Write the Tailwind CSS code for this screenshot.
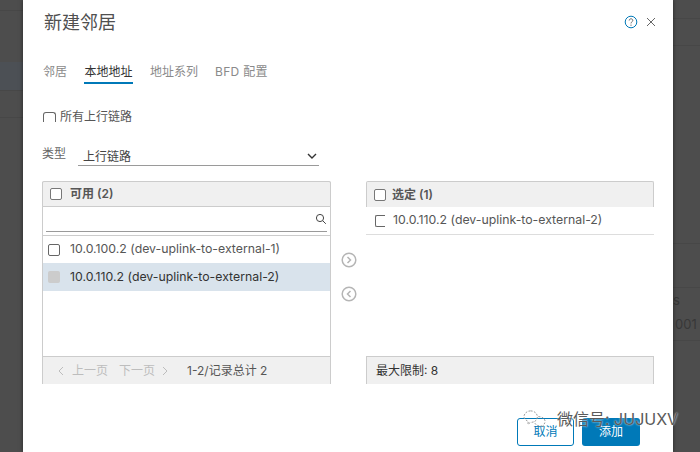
<!DOCTYPE html>
<html lang="en">
    <head>
        <meta charset="UTF-8" />
        <title>新建邻居</title>
        <script src="https://cdn.jsdelivr.net/npm/@tailwindcss/browser@4"></script>
    </head>
    <body class="overflow-hidden">
        <div class="relative flex w-[700px] h-[452px] bg-[#4d4d4d] text-[#565656] text-[12.3px] font-['Inter','Noto_Sans_CJK_SC',sans-serif]">
            <!-- dimmed page, left -->
            <div class="w-[23px] shrink-0">
                <div class="h-[11px] border-b border-[#474747]"></div>
                <div class="h-[51px]"></div>
                <div class="h-[29px] bg-[#4c5055] border-b border-[#474747]"></div>
                <div class="h-[27px] border-b border-[#474747]"></div>
            </div>

            <!-- modal -->
            <div class="relative w-[650px] shrink-0 bg-white shadow-[0_0_4px_rgba(0,0,0,0.5)]">
                <div class="flex items-start h-[55px] pl-[21px] pr-[17px] pt-[11px]">
                    <h1 class="flex-1 text-[18px] leading-[24px] text-[#505050]">新建邻居</h1>
                    <div class="flex items-center gap-[8px] pt-[4px]">
                        <svg width="14" height="14" viewBox="0 0 14 14" fill="none" stroke="#0079b8">
                            <circle cx="7" cy="7" r="5.8" />
                            <path d="M5.2 5.5c0-1 .8-1.700 1.800-1.700s1.800.7 1.800 1.600c0 1.500-1.800 1.400-1.800 3" stroke="#666666" />
                            <path d="M7 9.600v1.200" stroke="#666666" />
                        </svg>
                        <svg width="10" height="10" viewBox="0 0 10 10" stroke="#666666">
                            <path d="M1 1l8 8M9 1l-8 8" />
                        </svg>
                    </div>
                </div>

                <div class="flex h-[29px] pl-[20px] gap-[17px] text-[12px] text-[#8a8a8a]">
                    <span class="pt-[8px]">邻居</span>
                    <span class="pt-[8px] w-[49px] text-center text-[#333333] border-b-2 border-[#0079b8]">本地地址</span>
                    <span class="pt-[8px]">地址系列</span>
                    <span class="pt-[8px] tracking-[0.3px]">BFD 配置</span>
                </div>

                <label class="flex items-center gap-[4px] mt-[24px] ml-[20px] h-[18px] text-[12px]">
                    <span class="w-[13px] h-[10px] mb-[1px] border border-b-0 border-[#666666] rounded-t-[3px]"></span>
                    所有上行链路
                </label>

                <div class="flex items-center mt-[20px] ml-[19px] w-[277px] h-[20px] text-[12px]">
                    <span class="w-[36px] mb-[4px] text-[#666666]">类型</span>
                    <div class="flex items-center flex-1 h-[20px] pl-[5px] pr-[2px] pt-[2px] border-b border-[#9a9a9a] text-[#444444]">
                        <span class="flex-1">上行链路</span>
                        <svg width="10" height="7" viewBox="0 0 10 7" fill="none" stroke="#333333" stroke-width="1.4">
                            <path d="M1 1l4 4 4-4" />
                        </svg>
                    </div>
                </div>

                <div class="flex mt-[15px] ml-[19px]">
                    <!-- available -->
                    <div class="flex flex-col w-[289px] h-[203px] border-x border-[#cccccc] rounded-t-[2px]">
                        <div class="flex items-center h-[26px] -mx-px px-[7px] gap-[8px] bg-[#f0f0f0] border border-[#cccccc] rounded-t-[2px] text-[12px] font-semibold">
                            <span class="w-[12px] h-[12px] border-[1.5px] border-[#777777] rounded-[2px] bg-white"></span>
                            可用 (2)
                        </div>
                        <div class="flex items-center justify-end h-[25px] mx-[3px] border-b border-[#9a9a9a]">
                            <svg width="12" height="12" viewBox="0 0 12 12" fill="none" stroke="#444444">
                                <circle cx="5" cy="5" r="3.600" />
                                <path d="M7.800 7.800l3 3" />
                            </svg>
                        </div>
                        <div class="flex items-center h-[28px] mt-[3px] pl-[5px] gap-[10px] border-t border-[#cccccc]">
                            <span class="w-[12px] h-[12px] border border-[#666666] rounded-[2px]"></span>
                            10.0.100.2 (dev-uplink-to-external-1)
                        </div>
                        <div class="flex items-center h-[28px] pl-[5px] gap-[10px] bg-[#d9e3ec] text-[#333333]">
                            <span class="w-[12px] h-[12px] bg-[#cccccc] rounded-[2px]"></span>
                            10.0.110.2 (dev-uplink-to-external-2)
                        </div>
                        <div class="flex-1"></div>
                        <div class="flex items-center h-[28px] -mx-px pl-[15px] bg-[#f0f0f0] border-x border-t border-[#cccccc] text-[12px]">
                            <span class="flex items-center gap-[8px] text-[#bdbdbd]">
                                <svg width="6" height="10" viewBox="0 0 6 10" fill="none" stroke="#bdbdbd"><path d="M5 1L1 5l4 4" /></svg>
                                上一页
                            </span>
                            <span class="flex items-center gap-[7px] ml-[11px] text-[#bdbdbd]">
                                下一页
                                <svg width="6" height="10" viewBox="0 0 6 10" fill="none" stroke="#bdbdbd"><path d="M1 1l4 4-4 4" /></svg>
                            </span>
                            <span class="ml-[19px] text-[#565656]">1-2/记录总计 2</span>
                        </div>
                    </div>

                    <!-- move buttons -->
                    <div class="flex flex-col items-center gap-[18px] w-[35px] pt-[71px]">
                        <svg width="16" height="16" viewBox="0 0 16 16" fill="none" stroke="#b5b5b5" stroke-width="1.500">
                            <circle cx="8" cy="8" r="6.800" />
                            <path d="M6.500 5l3 3-3 3" />
                        </svg>
                        <svg width="16" height="16" viewBox="0 0 16 16" fill="none" stroke="#b5b5b5" stroke-width="1.500">
                            <circle cx="8" cy="8" r="6.800" />
                            <path d="M9.500 5l-3 3 3 3" />
                        </svg>
                    </div>

                    <!-- selected -->
                    <div class="flex flex-col w-[288px] h-[203px]">
                        <div class="flex items-center h-[26px] px-[7px] gap-[6px] bg-[#f0f0f0] border-x border-t border-[#cccccc] rounded-t-[2px] text-[12px] font-semibold">
                            <span class="w-[12px] h-[12px] border-[1.5px] border-[#777777] rounded-[2px] bg-white"></span>
                            选定 (1)
                        </div>
                        <div class="flex items-center h-[28px] pl-[9px] gap-[8px] border-b border-[#dddddd]">
                            <span class="w-[10px] h-[12px] border border-r-0 border-[#666666] rounded-l-[2px]"></span>
                            10.0.110.2 (dev-uplink-to-external-2)
                        </div>
                        <div class="flex-1"></div>
                        <div class="flex items-center h-[28px] pl-[9px] bg-[#f0f0f0] border-x border-t border-[#cccccc] text-[12px] text-[#333333]">
                            最大限制: 8
                        </div>
                    </div>
                </div>

                <div class="flex justify-end gap-[8px] mt-[34px] pr-[33px]">
                    <button class="w-[57px] h-[28px] border border-[#0079b8] rounded-[3px] text-[12px] text-[#0079b8]">取消</button>
                    <button class="w-[58px] h-[28px] bg-[#0079b8] rounded-[3px] text-[12px] text-white">添加</button>
                </div>
            </div>

            <!-- dimmed page, right -->
            <div class="flex-1 overflow-hidden text-[#383838] text-[13px]">
                <div class="h-[19px] border-b border-[#474747]"></div>
                <div class="h-[27px] border-b border-[#474747]"></div>
                <div class="h-[198px] border-b border-[#474747]"></div>
                <div class="h-[44px] border-b border-[#474747]"></div>
                <div class="flex flex-col h-[53px] gap-[8px] pt-[4px] pl-[2px] border-b border-[#474747]">
                    <span class="-ml-[2px] leading-[16px]">s</span>
                    <span class="leading-[16px]">001</span>
                </div>
            </div>

            <!-- watermark over the footer -->
            <div class="absolute left-[523px] top-[407px] flex items-center gap-[11px] text-[#5a5a5a] text-[16px] [text-shadow:0_0_2px_#ffffff]">
                <svg width="23" height="21" viewBox="0 0 24 20" fill="none" stroke="#999999" stroke-dasharray="2 1.500">
                    <path d="M8 1c4 0 7 3 7 6 0 4-3 6-7 6l-3 2 .6-3C3 11 1 9 1 7c0-3 3-6 7-6z" />
                    <path d="M16 7c4 0 7 2 7 5 0 2-1 3-2 4l.4 2-2.400-1.400c-3 .6-7-1-7-4.600" />
                </svg>
                <span>微信号: JUJUXV</span>
            </div>
        </div>
    </body>
</html>
